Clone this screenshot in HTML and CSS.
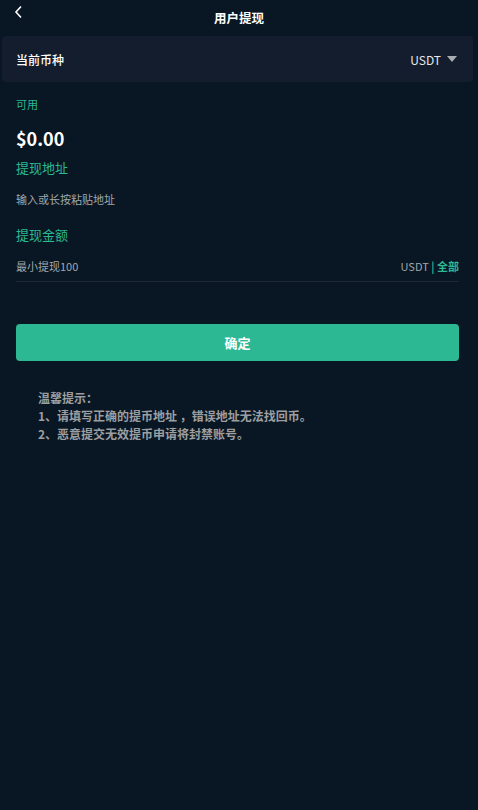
FILE: index.html
```html
<!DOCTYPE html>
<html lang="zh-CN">
<head>
    <meta charset="UTF-8">
    <meta name="viewport" content="width=device-width, initial-scale=1.0">
    <title>用户提现</title>
    <link rel="stylesheet" href="styles.css">
</head>
<body>
    <header class="top-bar">
        <a class="back" href="#">
            <svg width="10" height="14" viewBox="0 0 10 14"><path d="M7 1.5 L2 7 L7 12.5" fill="none" stroke="#fff" stroke-width="1.6"/></svg>
        </a>
        <h1 class="page-title">用户提现</h1>
        <span></span>
    </header>

    <div class="coin-card">
        <span class="coin-label">当前币种</span>
        <span class="coin-select">USDT <i class="caret"></i></span>
    </div>

    <main class="form">
        <div class="avail-label">可用</div>
        <div class="avail-amount">$0.00</div>

        <div class="field-title">提现地址</div>
        <div class="address-input">输入或长按粘贴地址</div>

        <div class="field-title amount-title">提现金额</div>
        <div class="amount-row">
            <span class="placeholder">最小提现100</span>
            <span class="unit">USDT <b class="sep">|</b> <b class="all">全部</b></span>
        </div>

        <button class="submit">确定</button>

        <div class="tips">
            <p>温馨提示：</p>
            <p>1、请填写正确的提币地址 ，错误地址无法找回币。</p>
            <p>2、恶意提交无效提币申请将封禁账号。</p>
        </div>
    </main>
</body>
</html>
```

FILE: styles.css
```css
body {
    margin: 0;
    background: #081723;
    color: #fff;
    font-family: "Noto Sans CJK SC", "Noto Sans", sans-serif;
    min-height: 100vh;
}

.top-bar {
    height: 36px;
    display: grid;
    grid-template-columns: 60px 1fr 60px;
    align-items: center;
}

.back {
    align-self: start;
    padding: 5px 0 0 14px;
    line-height: 0;
}

.page-title {
    margin: 0;
    text-align: center;
    font-size: 12.5px;
    font-weight: bold;
    line-height: 36px;
}

.coin-card {
    margin: 0 5px 0 2px;
    height: 46px;
    padding: 0 16px 0 14px;
    background: #131d2d;
    border-radius: 4px;
    display: flex;
    align-items: center;
    justify-content: space-between;
    font-size: 12px;
}

.coin-label {
    font-weight: 500;
}

.coin-select {
    display: flex;
    align-items: center;
    gap: 6px;
    color: #e6e8eb;
}

.caret {
    width: 0;
    height: 0;
    border-left: 5px solid transparent;
    border-right: 5px solid transparent;
    border-top: 6px solid #a9adb3;
}

.form {
    padding: 0 19px 0 16px;
}

.avail-label {
    margin-top: 14px;
    font-size: 11px;
    line-height: 16px;
    color: #2db894;
}

.avail-amount {
    margin-top: 14px;
    font-size: 18px;
    font-weight: bold;
    line-height: 24px;
}

.field-title {
    margin-top: 8px;
    font-size: 13px;
    line-height: 20px;
    color: #2db894;
}

.amount-title {
    margin-top: 18px;
}

.address-input {
    margin-top: 13px;
    font-size: 11px;
    line-height: 16px;
    color: #a3a7ab;
}

.amount-row {
    margin-top: 13px;
    padding-bottom: 7px;
    border-bottom: 1px solid #1f2a34;
    display: flex;
    justify-content: space-between;
    font-size: 11px;
    line-height: 16px;
    color: #a3a7ab;
}

.sep,
.all {
    color: #2db894;
}

.submit {
    display: block;
    width: 100%;
    margin-top: 42px;
    height: 37px;
    border: none;
    border-radius: 4px;
    background: #2db894;
    color: #fff;
    font-family: inherit;
    font-size: 13px;
    font-weight: bold;
}

.tips {
    margin-top: 28px;
    padding-left: 22px;
    color: #9c9ea0;
    font-size: 12px;
    font-weight: bold;
    line-height: 18px;
}

.tips p {
    margin: 0;
}
```
